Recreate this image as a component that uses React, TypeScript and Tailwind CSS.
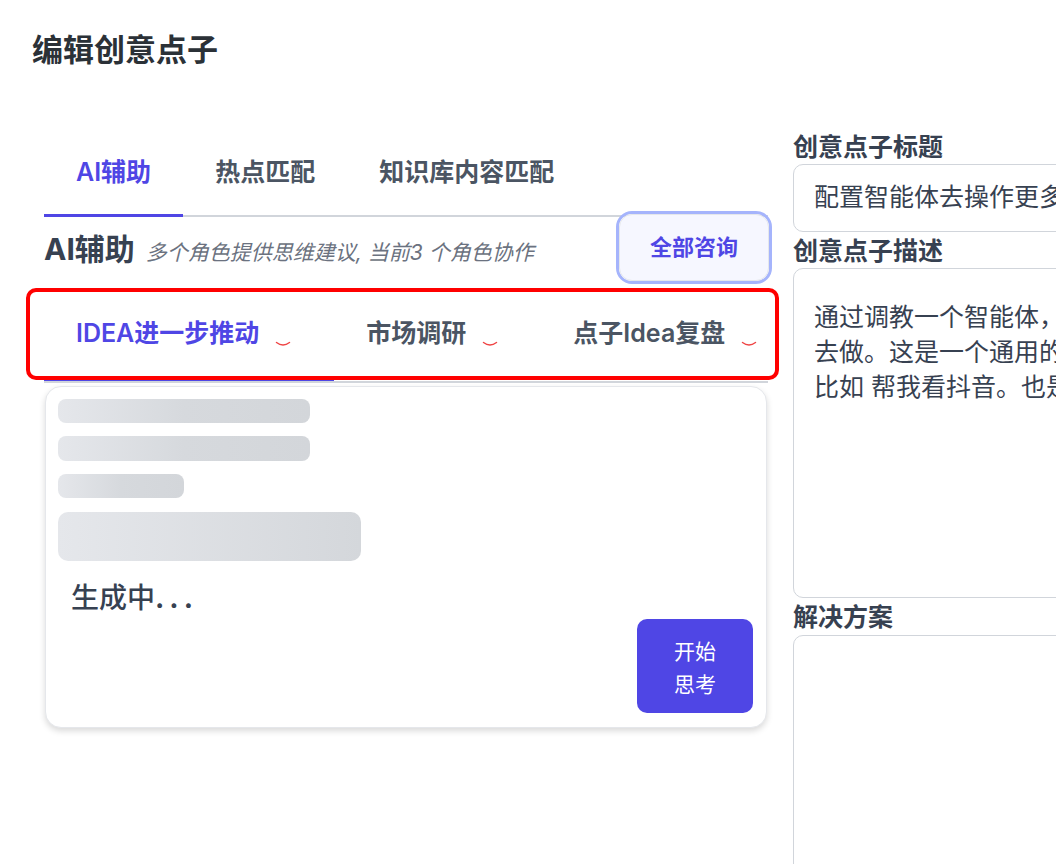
import React from 'react';

const font = { fontFamily: 'Inter, "Noto Sans CJK SC", "Noto Sans", sans-serif' };

const Spinner = () => (
    <svg width="16" height="6" viewBox="0 0 16 6" className="mt-[22px] shrink-0">
        <path d="M1.5 1.5 Q8 6.5 14.5 1.5" fill="none" stroke="#ef4444" strokeWidth="1.4" strokeLinecap="round" />
    </svg>
);

const SkeletonBar = ({ w, h }: { w: string; h: string }) => (
    <div className={`${w} ${h} rounded-[8px] bg-gradient-to-r from-[#e5e7eb] via-[#d6d9dd] to-[#d3d6da]`} />
);

export default function App() {
    const topTabs = ['AI辅助', '热点匹配', '知识库内容匹配'];
    const roleTabs = ['IDEA进一步推动', '市场调研', '点子Idea复盘'];

    return (
        <div style={font} className="w-[1056px] h-[864px] overflow-hidden bg-white">
            <div className="pt-[30px] pl-[32px]">
                <h1 className="text-[31px] leading-[40px] font-semibold text-[#2b3137]">编辑创意点子</h1>
            </div>

            <div className="flex mt-[62px] pl-[44px] w-[1500px]">
                {/* Left: AI assist panel */}
                <div className="w-[724px] shrink-0">
                    <div className="flex border-b-2 border-[#d1d5db]">
                        {topTabs.map((t, i) => (
                            <div
                                key={t}
                                className={`px-[32px] pt-[24px] pb-[26px] text-[25px] leading-[32px] font-semibold -mb-[2px] border-b-[3px] ${
                                    i === 0 ? 'text-[#4f46e5] border-[#4f46e5]' : 'text-[#4b5563] border-transparent'
                                }`}
                            >
                                {t}
                            </div>
                        ))}
                    </div>

                    {/* Heading row */}
                    <div className="flex items-center justify-between -mt-[6px] h-[73px] -mr-[4px]">
                        <div className="flex items-baseline gap-[11px] pt-[4px]">
                            <span className="text-[30px] font-bold text-[#374151]">AI辅助</span>
                            <span className="text-[21px] italic text-[#6b7280]">多个角色提供思维建议, 当前3 个角色协作</span>
                        </div>
                        <div className="w-[156px] h-[73px] rounded-[16px] border-[3px] border-[#a5b4fc] flex">
                            <button className="flex-1 rounded-[13px] border border-[#e5e7eb] bg-[#f6f7ff] text-[22px] font-semibold text-[#4f46e5]">
                                全部咨询
                            </button>
                        </div>
                    </div>

                    {/* Role tabs */}
                    <div className="relative">
                        <div className="flex border-b-2 border-[#d1d5db] overflow-hidden">
                            {roleTabs.map((t, i) => (
                                <div
                                    key={t}
                                    className={`flex items-center gap-[16px] pl-[32px] pr-[43px] pt-[33px] pb-[31px] -mb-[2px] border-b-[3px] shrink-0 ${
                                        i === 0 ? 'border-[#4f46e5]' : 'border-transparent'
                                    }`}
                                >
                                    <span className={`text-[25px] leading-[32px] font-semibold ${i === 0 ? 'text-[#4f46e5]' : 'text-[#4b5563]'}`}>
                                        {t}
                                    </span>
                                    <Spinner />
                                </div>
                            ))}
                        </div>
                        {/* annotation frame */}
                        <div className="absolute top-[4px] -left-[18px] w-[753px] h-[92px] border-4 border-[#ff0000] rounded-[10px] pointer-events-none" />
                    </div>

                    {/* Generating card */}
                    <div className="mt-[3px] mx-[1px] rounded-[16px] border border-[#e5e7eb] bg-white shadow-[0_3px_6px_rgba(0,0,0,0.15)] pt-[12px] pl-[12px] pr-[13px] pb-[14px]">
                        <div className="flex flex-col gap-[13px]">
                            <SkeletonBar w="w-[252px]" h="h-[24px]" />
                            <SkeletonBar w="w-[252px]" h="h-[25px]" />
                            <SkeletonBar w="w-[126px]" h="h-[24px]" />
                            <div className="w-[303px] h-[49px] rounded-[10px] bg-gradient-to-r from-[#e5e7eb] to-[#d4d7db] mt-[1px]" />
                        </div>
                        <div className="mt-[19px] pl-[13px] text-[28px] leading-[36px] font-medium text-[#374151]">
                            生成中<span className="tracking-[5px] font-bold">...</span>
                        </div>
                        <div className="flex justify-end mt-[3px]">
                            <button className="w-[116px] h-[94px] rounded-[10px] bg-[#4f46e5] text-white text-[21px] leading-[33px] pt-[4px]">
                                开始
                                <br />
                                思考
                            </button>
                        </div>
                    </div>
                </div>

                {/* Right: form fields */}
                <div className="ml-[25px] w-[500px] shrink-0">
                    <label className="block text-[25px] leading-[32px] font-semibold text-[#374151] -mt-[1px]">创意点子标题</label>
                    <div className="h-[68px] mt-[1px] rounded-[10px] border border-[#d1d5db] flex items-center pl-[20px] text-[25px] text-[#374151] whitespace-nowrap">
                        配置智能体去操作更多的应用软件
                    </div>
                    <label className="block mt-[3px] text-[25px] leading-[32px] font-semibold text-[#374151]">创意点子描述</label>
                    <div className="h-[330px] mt-[1px] rounded-[10px] border border-[#d1d5db] pl-[20px] pt-[31px] text-[25px] leading-[35px] text-[#374151] whitespace-nowrap">
                        <div>通过调教一个智能体，让它帮我们</div>
                        <div>去做。这是一个通用的能力，</div>
                        <div>比如 帮我看抖音。也是可以的</div>
                    </div>
                    <label className="block mt-[3px] text-[25px] leading-[32px] font-semibold text-[#374151]">解决方案</label>
                    <div className="h-[330px] mt-[2px] rounded-[10px] border border-[#d1d5db]" />
                </div>
            </div>
        </div>
    );
}
